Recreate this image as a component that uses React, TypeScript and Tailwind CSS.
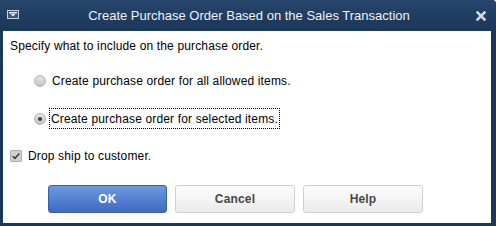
import React from 'react';

const font = { fontFamily: '"Liberation Sans", Arial, sans-serif' };

function Radio({ checked }: { checked?: boolean }) {
  return (
    <svg width="12" height="12" viewBox="0 0 12 12" className="shrink-0">
      <defs>
        <linearGradient id={checked ? 'rg1' : 'rg0'} x1="0" y1="0" x2="0" y2="1">
          <stop offset="0" stopColor="#e6e6e6" />
          <stop offset="1" stopColor="#c4c4c4" />
        </linearGradient>
      </defs>
      <circle cx="6" cy="6" r="5.4" fill={`url(#${checked ? 'rg1' : 'rg0'})`} stroke="#a8a8a8" strokeWidth="0.9" />
      {checked && <circle cx="6" cy="6" r="2.1" fill="#3c3c3c" />}
    </svg>
  );
}

function Btn({ label, primary }: { label: string; primary?: boolean }) {
  return (
    <button
      className={
        primary
          ? 'w-[119px] h-[28px] rounded-[3px] border border-[#3b5fa3] bg-gradient-to-b from-[#6b9be0] to-[#3f69c3] text-white text-[12px] font-bold'
          : 'w-[120px] h-[28px] rounded-[3px] border border-[#cfcfcf] bg-gradient-to-b from-[#fdfdfd] to-[#ebebeb] text-[#474747] text-[12px] font-bold'
      }
      style={font}
    >
      {label}
    </button>
  );
}

export default function App() {
  return (
    <div className="w-[496px] h-[226px] bg-[#1b3759] flex flex-col rounded-tr-[4px] overflow-hidden" style={font}>
      {/* title bar */}
      <div className="h-[31px] relative flex items-center justify-center bg-gradient-to-b from-[#26456b] to-[#1b3759]">
        <svg width="12" height="9" viewBox="0 0 12 9" className="absolute left-[7px] top-[10px]">
          <rect x="0.5" y="0.5" width="11" height="8" fill="#3a5675" stroke="#c9d2dc" />
          <rect x="2" y="2" width="8" height="1.5" fill="#e8edf2" />
          <path d="M3.5 4 L8.5 4 L6 6.5 Z" fill="#e8edf2" />
        </svg>
        <span className="text-[13px] text-[#eef2f6] pl-[2px]">Create Purchase Order Based on the Sales Transaction</span>
        <svg width="10" height="10" viewBox="0 0 10 10" className="absolute left-[476px] top-[11px]">
          <path d="M1.5 1.5 L8.5 8.5 M8.5 1.5 L1.5 8.5" stroke="#d0d6dd" strokeWidth="2.6" strokeLinecap="square" />
        </svg>
      </div>
      {/* body */}
      <div className="flex-1 bg-white ml-[3px] mr-[5px] mb-[3px] pt-[8px] text-[12px] text-black leading-[14px] tracking-[0.15px]">
        <div className="pl-[7px]">Specify what to include on the purchase order.</div>
        <div className="mt-[21px] pl-[31px] flex items-center gap-[6px]">
          <Radio />
          <span>Create purchase order for all allowed items.</span>
        </div>
        <div className="mt-[20px] pl-[31px] flex items-center gap-[3px]">
          <Radio checked />
          <span className="h-[21px] flex items-center border border-dotted border-black pl-[1px] pr-[1px]">
            Create purchase order for selected items.
          </span>
        </div>
        <div className="mt-[20px] pl-[7px] flex items-center gap-[6px]">
          <svg width="12" height="12" viewBox="0 0 12 12" className="shrink-0">
            <rect x="0.5" y="0.5" width="11" height="11" rx="1.5" fill="#d2d2d2" stroke="#a9a9a9" />
            <path d="M2.8 6.2 L5 8.4 L9.3 3.4" fill="none" stroke="#3a3a3a" strokeWidth="1.6" />
          </svg>
          <span>Drop ship to customer.</span>
        </div>
        <div className="mt-[22px] pl-[45px] flex gap-[8px]">
          <Btn label="OK" primary />
          <Btn label="Cancel" />
          <Btn label="Help" />
        </div>
      </div>
    </div>
  );
}
